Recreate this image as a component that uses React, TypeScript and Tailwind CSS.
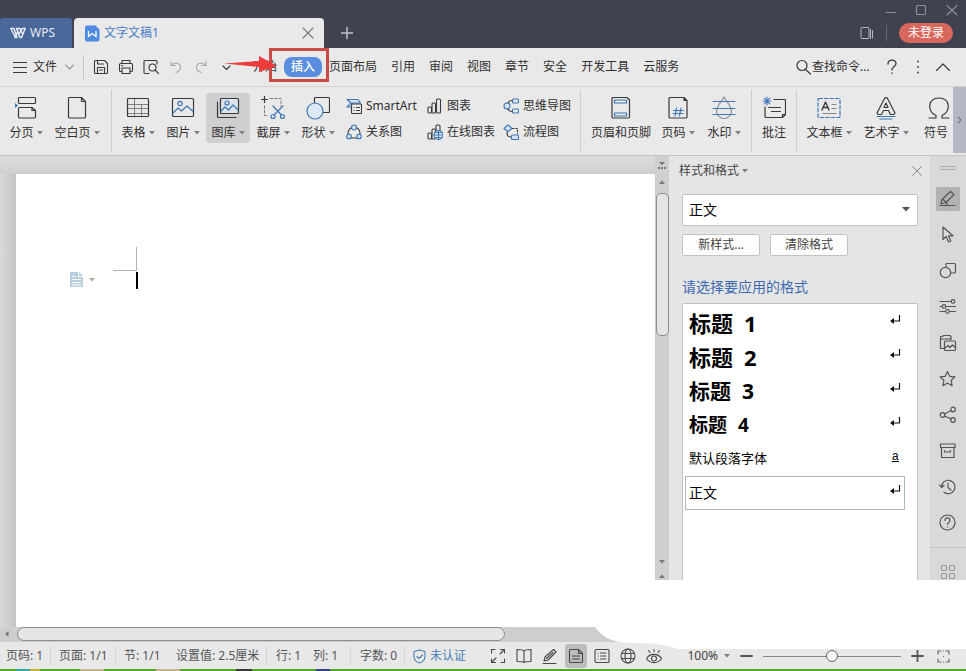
import type { ReactNode } from "react";

const INK = "#3a3a3a";
const BLUE = "#3f76b5";

function Icon({ w = 24, h = 24, stroke = INK, sw = 1.2, children }: { w?: number; h?: number; stroke?: string; sw?: number; children: ReactNode }) {
  return (
    <svg
      width={w}
      height={h}
      viewBox={`0 0 ${w} ${h}`}
      fill="none"
      stroke={stroke}
      strokeWidth={sw}
      strokeLinecap="round"
      strokeLinejoin="round"
      className="shrink-0"
      aria-hidden="true"
    >
      {children}
    </svg>
  );
}

function Caret({ color = "#808080" }: { color?: string }) {
  return (
    <svg width="6" height="4" viewBox="0 0 6 4" fill={color} className="shrink-0" aria-hidden="true">
      <path d="M0 0h6L3 3.5z" />
    </svg>
  );
}

function TitleBar() {
  return (
    <header className="flex h-12 shrink-0 items-end bg-[#40434f]">
      <button className="flex h-[30px] w-[72px] items-center gap-1 rounded-t-[3px] bg-[#496899] pl-2.5 text-[#e4e9f2]">
        <Icon w={16} h={12} stroke="#eef1f7" sw={1.4}>
          <path d="M.8 1.500h3.200L7 10.500h-1.500L.8 1.500M5 10.500 8 4M6.500 1.500h3.500L12 6M6.500 1.500 10 10.500h1.500L15.200 1.500h-3L8.500 8" />
        </Icon>
        <span>WPS</span>
      </button>
      <div className="ml-0.5 flex h-[30px] w-[250px] items-center rounded-t-[4px] bg-[#e9e9e9] pr-2.5 pl-[11px]">
        <svg width="15" height="17" viewBox="0 0 15 17" className="shrink-0" aria-hidden="true">
          <path d="M2 .5h8.500L14.500 4.500V14.500a2 2 0 0 1-2 2H2a2 2 0 0 1-2-2V2.500A2 2 0 0 1 2 .5z" fill="#4f8ae2" />
          <path d="M3.500 6v5.500L7.200 8.500 11 11.500V6" fill="none" stroke="#fff" strokeWidth="1.300" />
        </svg>
        <span className="ml-1 flex-1 text-[#4a7cc7]">文字文稿1</span>
        <button aria-label="关闭标签">
          <Icon w={12} h={12} stroke="#777" sw={1.1}><path d="M1 1l10 10M11 1 1 11" /></Icon>
        </button>
      </div>
      <button className="mb-2 ml-4" aria-label="新建标签">
        <Icon w={14} h={14} stroke="#c2c4ca" sw={1.5}><path d="M7 1.500v11M1.500 7h11" /></Icon>
      </button>
      <div className="ml-auto flex h-full flex-col items-end pr-2">
        <div className="flex h-[19px] items-center gap-[19px]">
          <button aria-label="最小化"><Icon w={10} h={12} stroke="#8f929b" sw={1.1}><path d="M0 8.500h10" /></Icon></button>
          <button aria-label="最大化"><Icon w={12} h={12} stroke="#8f929b" sw={1.1}><rect x="1.500" y="1.500" width="9" height="9" rx="1" /></Icon></button>
          <button aria-label="关闭"><Icon w={12} h={12} stroke="#8f929b" sw={1.1}><path d="M1 1.500l10 9.500M11 1.500 1 11" /></Icon></button>
        </div>
        <div className="mt-1 flex items-center pr-[5px]">
          <button aria-label="切换窗口">
            <Icon w={14} h={14} stroke="#b4b6bc" sw={1}><rect x="1" y="1.500" width="8" height="11" rx="1" /><path d="M10.500 3.500v9M12.500 4.500v7.500" /></Icon>
          </button>
          <span className="mx-3 h-4 w-px bg-[#666975]" />
          <button className="h-5 w-[54px] rounded-full bg-[#d8685d] text-white">未登录</button>
        </div>
      </div>
    </header>
  );
}

const tabs = ["开始", "插入", "页面布局", "引用", "审阅", "视图", "章节", "安全", "开发工具", "云服务"];

function MenuBar() {
  return (
    <nav className="relative flex h-[39px] shrink-0 items-center border-b border-[#d3d3d3] bg-[#e9e9e9] text-[#303030]">
      <button className="flex w-[83px] items-center pl-[13px]">
        <Icon w={14} h={12} sw={1.1}><path d="M0 1.500h14M0 6.500h14M0 11.500h14" /></Icon>
        <span className="ml-1.5">文件</span>
        <span className="ml-2"><Icon w={9} h={6} stroke="#999" sw={1.1}><path d="M.5 1l4 4 4-4" /></Icon></span>
      </button>
      <span className="h-6 w-px bg-[#c6c6c6]" />
      <div className="flex w-[162px] items-center gap-[9px] pl-[9px]">
        <button aria-label="保存">
          <Icon w={16} h={16} sw={1.1}><path d="M2.500 1.500h9l3 3v9a1 1 0 0 1-1 1h-11a1 1 0 0 1-1-1v-11a1 1 0 0 1 1-1zM4.500 14.500v-6h7v6M4.500 1.500v3.500h6M6.500 11h3" /></Icon>
        </button>
        <button aria-label="打印">
          <Icon w={16} h={16} sw={1.1}><path d="M4 4.500v-3h8v3M3.500 12.500h-1a1 1 0 0 1-1-1v-6a1 1 0 0 1 1-1h11a1 1 0 0 1 1 1v6a1 1 0 0 1-1 1h-1M4 9h8v5.500H4zM3.500 6.800h1.500" /></Icon>
        </button>
        <button aria-label="打印预览">
          <Icon w={16} h={16} sw={1.1}><path d="M6 14.500H2a1 1 0 0 1-1-1v-11a1 1 0 0 1 1-1h11a1 1 0 0 1 1 1V5" /><circle cx="9.500" cy="8.500" r="3.500" /><path d="M12 11l3.500 3.500" /></Icon>
        </button>
        <button aria-label="撤销">
          <Icon w={16} h={16} stroke="#a8a8a8" sw={1.1}><path d="M3 2.500v4h4.500M3 6.500C6 3 12.500 3.500 12.500 8.500c0 3-2 4-4.500 5" /></Icon>
        </button>
        <button aria-label="恢复">
          <Icon w={16} h={16} stroke="#a8a8a8" sw={1.1}><path d="M13 2.500v4H8.500M13 6.500C10 3 3.500 3.500 3.500 8.500c0 3 2 4 4.500 5" /></Icon>
        </button>
        <button aria-label="自定义快速访问工具栏" className="ml-1">
          <Icon w={9} h={8} sw={1.1}><path d="M1 3l3.500 3.500L8 3" /></Icon>
        </button>
      </div>
      <div className="flex shrink-0 items-center">
        {tabs.map((t) => (
          <button key={t} className={t === "插入" ? "h-5 rounded-lg bg-[#5a8de0] px-[7px] font-medium text-white" : "h-5 px-[7px]"}>
            {t}
          </button>
        ))}
      </div>
      <div className="ml-auto flex items-center pr-4">
        <label className="flex items-center gap-px">
          <Icon w={15} h={16} sw={1.2}><circle cx="6" cy="6.500" r="5" /><path d="M9.500 10.500l5 4.500" /></Icon>
          <input aria-label="查找命令" placeholder="查找命令..." className="w-[60px] bg-transparent outline-none placeholder:text-[#303030]" />
        </label>
        <button aria-label="帮助" className="ml-3.5">
          <Icon w={12} h={16} sw={1.3}><path d="M2 5c0-5 8-5 8-.5C10 7.500 6 7.500 6 11M6 14v.4" /></Icon>
        </button>
        <button aria-label="更多" className="ml-[17px]">
          <Icon w={6} h={16} sw={1.800}><path d="M3 2.500v.1M3 8v.1M3 13.500v.1" /></Icon>
        </button>
        <button aria-label="折叠功能区" className="ml-[15px]">
          <Icon w={14} h={8} sw={1.2}><path d="M.5 7.500L7 1l6.500 6.500" /></Icon>
        </button>
      </div>
      <div className="pointer-events-none absolute top-0 left-[269px] h-[34px] w-[60px] border-[3px] border-[#c84b48]" />
      <svg width="54" height="20" viewBox="0 0 54 20" fill="#ee3b3c" className="pointer-events-none absolute top-[7px] left-[224px]" aria-hidden="true">
        <path d="M0 8.500 35 6V1l18 10L35 17v-5z" />
      </svg>
    </nav>
  );
}

function BigButton({ label, icon, caret = true, wide = "w-11", active = false }: { label: string; icon: ReactNode; caret?: boolean; wide?: string; active?: boolean }) {
  return (
    <button className={`${wide} flex h-[50px] shrink-0 flex-col items-center justify-between rounded pt-[3px] pb-px ${active ? "bg-[#cfcfcf]" : ""}`}>
      {icon}
      <span className="flex items-center gap-[3px] leading-[18px] whitespace-nowrap">
        {label}
        {caret && <Caret />}
      </span>
    </button>
  );
}

function Rule() {
  return <span className="h-[62px] w-px shrink-0 bg-[#cdcdcd]" />;
}

const smallTools: { label: string; icon: ReactNode }[] = [
  { label: "SmartArt", icon: <Icon w={16} h={16} sw={1.1}><path d="M6 9H1l4-4L1 1.500h11L14.500 5H6z" fill="#d5e4f5" stroke={BLUE} /><rect x="5.500" y="6" width="10" height="9.500" rx="1" fill="#e9e9e9" /><path d="M8 9.500h.1M10.500 9.500h3M8 12.500h.1M10.500 12.500h3" /></Icon> },
  { label: "图表", icon: <Icon w={16} h={16} sw={1.1}><rect x="1" y="9" width="3.500" height="6" rx="1" /><rect x="5" y="5" width="3.500" height="10" rx="1" /><rect x="9.500" y="1" width="4" height="14" rx="1" /></Icon> },
  { label: "思维导图", icon: <Icon w={16} h={16} stroke={BLUE} sw={1.1}><circle cx="4" cy="8" r="3" fill="#d5e4f5" /><rect x="9.500" y="1" width="6" height="4" rx="1" /><rect x="9.500" y="11" width="6" height="4" rx="1" /><path d="M5 5c1-2 2-2.500 4-2.500M5 11c1 2 2 2.500 4 2.500" stroke={INK} /></Icon> },
  { label: "关系图", icon: <Icon w={16} h={16} sw={1.1}><path d="M5 4C2 5.500 2 8 2 10M11 4c3 1.500 3 4 3 6M5 14h6" /><g fill="#d5e4f5" stroke={BLUE}><circle cx="8" cy="3.500" r="2.500" /><circle cx="3" cy="12.500" r="2.300" /><circle cx="13" cy="12.500" r="2.300" /></g></Icon> },
  { label: "在线图表", icon: <Icon w={16} h={16} sw={1.1}><rect x="1" y="9" width="3.500" height="6" rx="1" /><rect x="5" y="5" width="3.500" height="10" rx="1" /><rect x="9" y="1" width="4" height="12" rx="1" /><circle cx="11.500" cy="11" r="4.500" fill="#e3edf8" stroke={BLUE} /><path d="M7 11h9M11.500 6.500v9M8 8.500h7M8 13.500h7" stroke={BLUE} /></Icon> },
  { label: "流程图", icon: <Icon w={16} h={16} sw={1.1}><path d="M5 .8L9 4.500 5 7.500 1 4.500z" fill="#d5e4f5" stroke={BLUE} /><path d="M9.500 4.500h5v5" strokeDasharray="1.500 1.800" /><path d="M4 8c0 4 1 5 4 5" /><rect x="8.500" y="11" width="7" height="4.500" rx="1" fill="#d5e4f5" stroke={BLUE} /></Icon> },
];

function Ribbon() {
  return (
    <section className="flex h-[69px] shrink-0 items-center overflow-hidden border-b border-[#c4c4c4] bg-[#e9e9e9] text-[#303030]">
      <div className="flex h-full w-[111px] shrink-0 pt-1.5 pl-1">
        <BigButton label="分页" icon={<Icon><rect x="4.500" y="1.500" width="17" height="6" rx="1" /><path d="M5.500 11.500h12.500l3.500 3V21a1 1 0 0 1-1 1h-15a1 1 0 0 1-1-1v-8.500a1 1 0 0 1 1-1zM18 11.500v3h3.500" /><path d="M1 7l3 2.500L1 12z" fill={BLUE} stroke="none" /></Icon>} />
        <BigButton label="空白页" wide="w-[58px]" icon={<Icon><path d="M4.500 1.500h12l4 4V21a1 1 0 0 1-1 1h-15a1 1 0 0 1-1-1V2.500a1 1 0 0 1 1-1zM16.500 1.500v4h4" /></Icon>} />
      </div>
      <Rule />
      <div className="flex h-full w-[234px] shrink-0 gap-px pt-1.5 pl-1">
        <BigButton label="表格" icon={<Icon><path d="M2 8.500h20M2 12.500h20M2 17.500h20M8.500 2v19M15.500 8.500V21" stroke="#808080" strokeWidth="1" /><rect x="1.500" y="2.500" width="21" height="18" rx="1" /></Icon>} />
        <BigButton label="图片" icon={<Icon><rect x="1.500" y="2.500" width="21" height="18" rx="1" /><g stroke={BLUE}><circle cx="9" cy="7.500" r="2.200" /><path d="M2 17l5-5 3.500 3L16 10l6 5.500" /></g></Icon>} />
        <BigButton label="图库" active icon={<Icon><rect x="4.500" y="2.500" width="18" height="15" rx="1" fill="#dce3ec" /><path d="M1.500 6v14.500a1 1 0 0 0 1 1H20" /><g stroke={BLUE}><circle cx="11" cy="7" r="2" /><path d="M5 15l4-4 3.500 3L17 9l5 5" /></g></Icon>} />
        <BigButton label="截屏" icon={<Icon><path d="M3.500 0v7M0 3.500h7" strokeLinecap="butt" /><path d="M9 2.500h11v8M3.500 10v9.500h4" stroke="#777" strokeWidth="1" strokeDasharray="2.500 2" /><g stroke={BLUE}><path d="M12 10l8.500 9M22 10l-9 9" /><circle cx="12" cy="20.500" r="2" /><circle cx="21.500" cy="20.500" r="2" /></g></Icon>} />
        <BigButton label="形状" icon={<Icon><rect x="8.500" y="1.500" width="15" height="15" rx="1" /><circle cx="9" cy="15" r="8" fill="#dde9f6" stroke={BLUE} /></Icon>} />
      </div>
      <div className="grid h-full w-[234px] shrink-0 grid-cols-[81px_76px_77px] grid-rows-[26px_26px] pt-1.5">
        {smallTools.map((t) => (
          <button key={t.label} className="flex items-center gap-1 whitespace-nowrap">
            {t.icon}
            {t.label}
          </button>
        ))}
      </div>
      <Rule />
      <div className="flex h-full w-[170px] shrink-0 pt-1.5 pl-1.5">
        <BigButton label="页眉和页脚" caret={false} wide="w-[68px]" icon={<Icon><path d="M4 1.500h14l2.500 2.500V21a1 1 0 0 1-1 1H4a1 1 0 0 1-1-1V2.500a1 1 0 0 1 1-1z" /><rect x="5.500" y="4" width="12" height="3" stroke={BLUE} /><rect x="5.500" y="17" width="12" height="3" stroke={BLUE} /></Icon>} />
        <BigButton label="页码" wide="w-[46px]" icon={<Icon><path d="M4 1.500h14l3 3V21a1 1 0 0 1-1 1H4a1 1 0 0 1-1-1V2.500a1 1 0 0 1 1-1zM18 1.500v3h3" /><path d="M10.500 12l-1.500 8M15 12l-1.500 8M7.500 14.500h10M7 17.500h10" stroke={BLUE} /></Icon>} />
        <BigButton label="水印" wide="w-[46px]" icon={<Icon><path d="M12 1c-2 4-7.500 9-7.500 14a7.500 7.500 0 0 0 15 0C19.500 10 14 5 12 1z" stroke="#8a9099" /><path d="M1 5.500h22M1 12.500h22M1 18.500h22" stroke={BLUE} /></Icon>} />
      </div>
      <Rule />
      <div className="flex h-full w-11 shrink-0 pt-1.5">
        <BigButton label="批注" caret={false} icon={<Icon><path d="M12 3.500h10.500a1 1 0 0 1 1 1v14l-3 3H4a1 1 0 0 1-1-1V11M6.500 11.500h12M9.500 15.500h9M20.500 21.500v-3h3" /><path d="M5 1v8M1 5h8M2.200 2.200l5.600 5.600M7.800 2.200L2.200 7.800" stroke={BLUE} strokeWidth="1.100" /></Icon>} />
      </div>
      <Rule />
      <div className="flex h-full shrink-0 pt-1.5 pl-1">
        <BigButton label="文本框" wide="w-14" icon={<Icon><rect x="1" y="2.500" width="22" height="19" rx="1" stroke={BLUE} strokeDasharray="3.500 2" /><path d="M5 14L8.500 6l3.500 8M6.200 11.500h4.600" strokeWidth="1.400" /><path d="M15 8.500h4M15 12.500h4M6 17.500h13" stroke="#888" strokeWidth="1" /></Icon>} />
        <BigButton label="艺术字" wide="w-[58px]" icon={<Icon><path d="M10.500 2.500a1.700 1.700 0 0 1 3 0l7.500 14.500-1 1.500h-3.500l-2-4h-5l-2 4H4L3 17zM12 7l-2 4.500h4z" /><path d="M3 20.500h18M6 23h12" stroke={BLUE} /></Icon>} />
        <BigButton label="符号" caret={false} wide="w-[38px] pl-1" icon={<span className="pl-1.5"><Icon><path d="M2 22h7v-2.500C-.5 15 1 2 12 2s12.500 13 3 17.500V22h7" /></Icon></span>} />
      </div>
      <button aria-label="向右滚动" className="mb-0.5 ml-auto flex h-[66px] w-[13px] shrink-0 items-center justify-center bg-[#b4b8c6]">
        <Icon w={5} h={8} stroke="#707583" sw={1.1}><path d="M1 1l3 3-3 3" /></Icon>
      </button>
    </section>
  );
}

function Tri({ up = false }: { up?: boolean }) {
  return (
    <svg width="8" height="4" viewBox="0 0 8 4" fill="#777" className={up ? "block rotate-180" : "block"} aria-hidden="true">
      <path d="M1 0h6L4 3.500z" />
    </svg>
  );
}

function DocumentArea() {
  return (
    <div className="flex min-w-0 flex-1">
      <main className="flex flex-1 flex-col bg-[#d4d4d4]">
        <div className="h-[18px] shrink-0 bg-linear-to-b from-[#dcdcdc] to-[#cfcfcf]" />
        <div className="flex flex-1">
          <div className="w-4 bg-linear-to-r from-[#dadada] to-[#c4c4c4]" />
          <article className="flex flex-1 items-start bg-white pt-[73px] pl-[54px]">
            <button aria-label="段落布局" className="mt-[25px] flex items-center gap-[5px]">
              <svg width="14" height="16" viewBox="0 0 14 16" aria-hidden="true">
                <path d="M0 0h8v5h5v10H0z" fill="#b9cfe0" />
                <path d="M9 0l4 4H9z" fill="#b9cfe0" />
                <path d="M2 4.500h4M2 7.500h9M2 10.500h9M2 13h9" stroke="#fff" />
              </svg>
              <Caret color="#aaa99a" />
            </button>
            <div className="ml-[18px] flex w-[25px] flex-col items-end">
              <span className="mr-px h-6 w-6 border-r border-b border-[#b5b5b5]" />
              <span className="mt-px h-[17px] w-0.5 bg-black" />
            </div>
          </article>
        </div>
      </main>
      <div className="flex w-3.5 shrink-0 flex-col items-center bg-[#cfcfcf]">
        <svg width="8" height="8" viewBox="0 0 8 8" className="mt-1.5" fill="#777" aria-hidden="true">
          <path d="M1 0h6L4 3zM0 5h2v2H0zM3 5h2v2H3zM6 5h2v2H6z" />
        </svg>
        <span className="mt-2.5"><Tri up /></span>
        <span className="mt-[9px] h-[143px] w-[13px] shrink-0 rounded-[5px] border border-[#8c8c8c] bg-[#e4e4e4]" />
        <span className="mt-auto flex flex-col items-center gap-2.5 pb-[49px]">
          <Tri />
          <Tri up />
        </span>
      </div>
    </div>
  );
}

function ReturnMark() {
  return (
    <Icon w={12} h={12} stroke="#111" sw={1.2}>
      <path d="M10.500 1v6H3" strokeLinecap="butt" strokeLinejoin="miter" />
      <path d="M1 7l4-3v6z" fill="#111" stroke="none" />
    </Icon>
  );
}

const headings = [
  { n: "1", size: "text-[22px]" },
  { n: "2", size: "text-[22px]" },
  { n: "3", size: "text-[21px]" },
  { n: "4", size: "text-[19px]" },
];

function StylesPane() {
  return (
    <aside className="flex w-[261px] shrink-0 flex-col bg-[#e5e5e5] pr-3 pl-[13px] text-[#444]">
      <div className="flex h-[30px] items-center justify-between">
        <button className="-ml-[3px] flex items-center gap-[3px]">
          样式和格式
          <Caret />
        </button>
        <button aria-label="关闭窗格" className="-mr-1">
          <Icon w={10} h={10} stroke="#888" sw={1}><path d="M.5 .5l9 9M9.500 .5l-9 9" /></Icon>
        </button>
      </div>
      <label className="relative mt-2 block">
        <select aria-label="当前样式" className="h-8 w-full appearance-none rounded-xs border border-[#c2c2c2] bg-white pl-1.5 text-sm text-black">
          <option>正文</option>
        </select>
        <svg width="8" height="5" viewBox="0 0 8 5" fill="#555" className="pointer-events-none absolute top-[13px] right-2" aria-hidden="true"><path d="M0 0h8L4 4.500z" /></svg>
      </label>
      <div className="mt-2 flex gap-2.5">
        <button className="h-[22px] w-[78px] rounded-xs border border-[#c2c2c2] bg-[#fdfdfd] leading-5">新样式...</button>
        <button className="h-[22px] w-[78px] rounded-xs border border-[#c2c2c2] bg-[#fdfdfd] leading-5">清除格式</button>
      </div>
      <h2 className="mt-[21px] text-sm text-[#3d69b0]">请选择要应用的格式</h2>
      <div className="mt-1.5 flex flex-1 flex-col rounded-t-xs border border-b-0 border-[#c2c2c2] bg-white py-0.5 pr-3 pl-0.5 text-black">
        {headings.map((h) => (
          <button key={h.n} className={`${h.size} flex h-[34px] items-center justify-between border border-transparent px-[3px] font-bold`}>
            <span className="flex gap-[11px] leading-8"><span>标题</span><span>{h.n}</span></span>
            <span className="pb-1.5"><ReturnMark /></span>
          </button>
        ))}
        <button className="flex h-[34px] items-center justify-between border border-transparent pr-[5px] pl-[3px] text-[13px]">
          默认段落字体
          <span className="pb-1 font-mono text-xs underline">a</span>
        </button>
        <button className="flex h-[34px] items-center justify-between border border-[#a9b9c2] px-[3px] text-sm">
          正文
          <span className="pb-1.5"><ReturnMark /></span>
        </button>
      </div>
    </aside>
  );
}

const sideTools: { label: string; icon: ReactNode }[] = [
  { label: "样式", icon: <><path d="M1 15.500h15M2 14l1-4.500L11.500 1.500l3.500 3L7 12.500zM3.500 9l4 3.500M8 15v-2" /></> },
  { label: "选择", icon: <path d="M4 1v12.500l3.200-3 2.300 5.500 2.300-1-2.300-5.200h4.500z" /> },
  { label: "形状", icon: <><path d="M7 5V2.500a1 1 0 0 1 1-1h7.500a1 1 0 0 1 1 1V10a1 1 0 0 1-1 1H12" /><circle cx="6.500" cy="10.500" r="5.200" /></> },
  { label: "属性", icon: <><path d="M1 3.500h11M1 8.500h2M7 8.500h9.500M1 13.500h5.500M10.500 13.500h6" /><circle cx="14" cy="3.500" r="1.800" /><circle cx="5" cy="8.500" r="1.800" /><circle cx="8.500" cy="13.500" r="1.800" /></> },
  { label: "图库", icon: <><path d="M5 14.500H1.500V2.500h2l1-1H11l1 1v3M1.500 5H12" /><rect x="5.500" y="7" width="11" height="9.500" rx="1" /><path d="M6 14l3-2.500 2 2 2.500-2.500 3 2.500" /></> },
  { label: "收藏", icon: <path d="M8.500 1.500l2.200 4.800 5.200.6-3.800 3.600 1 5.200-4.600-2.600-4.600 2.600 1-5.200L1.100 6.900l5.200-.6z" /> },
  { label: "分享", icon: <><circle cx="3.500" cy="9" r="2.300" /><circle cx="14" cy="3.500" r="2.300" /><circle cx="14" cy="14" r="2.300" /><path d="M5.500 8L12 4.500M5.500 10l6.500 3" /></> },
  { label: "归档", icon: <><rect x="1.500" y="2" width="14.500" height="3.500" /><path d="M2.500 5.500V15.500h12.500V5.500M5.500 8.500v1.500h6V8.500" /></> },
  { label: "历史", icon: <><path d="M2.500 9a6.700 6.700 0 1 1 2.500 5.200M.5 7l2 2.500 2.500-2M9 5v4.500l3 2.500" /></> },
  { label: "帮助", icon: <><circle cx="8.500" cy="8.500" r="7.500" /><path d="M6 6.500c0-3.500 5-3.500 5 0 0 2-2.500 2-2.500 4M8.500 12.800v.1" /></> },
];

function SideBar() {
  return (
    <div className="flex w-9 shrink-0 flex-col items-center bg-[#d9d9d9]">
      <span className="mt-2.5 h-1 w-4 shrink-0 border-y border-[#aaa]" />
      <div className="mt-[17px] flex flex-col gap-3">
        {sideTools.map((t, i) => (
          <button key={t.label} aria-label={t.label} className={`flex size-6 items-center justify-center rounded-xs ${i === 0 ? "bg-[#b2b2b2]" : ""}`}>
            <Icon w={18} h={18} stroke="#555" sw={1.2}>{t.icon}</Icon>
          </button>
        ))}
      </div>
      <span className="mt-3 h-px w-full bg-[#c4c4c4]" />
      <button aria-label="更多工具" className="mt-4">
        <Icon w={16} h={16} stroke="#999" sw={1.1}><rect x="1.500" y="1.500" width="5" height="5" rx="1" /><rect x="9.500" y="1.500" width="5" height="5" rx="1" /><rect x="1.500" y="9.500" width="5" height="5" rx="1" /><rect x="9.500" y="9.500" width="5" height="5" rx="1" /></Icon>
      </button>
    </div>
  );
}

const viewModes: { label: string; icon: ReactNode }[] = [
  { label: "全屏显示", icon: <path d="M1.500 5V1.500H5M10.500 1.500h4V5M14.500 11v3.500H11M5.500 14.500h-4V11M10 6l4-4M6 10l-4 4" /> },
  { label: "阅读版式", icon: <path d="M8 3v11.500M8 3C7 1.500 4 1.500 1 1.500v12c3 0 6 0 7 1 1-1 4-1 7-1v-12c-3 0-6 0-7 1.500z" /> },
  { label: "写作模式", icon: <path d="M1 15.500h13M2 13l1-4L11.500 1.500l2.500 2.500L6 12zM4.500 10.500l6.500-6" /> },
  { label: "页面视图", icon: <path d="M2.500 1.500h8l4 4v8a1 1 0 0 1-1 1h-11a1 1 0 0 1-1-1v-11a1 1 0 0 1 1-1zM10.500 1.500v4h4M4.500 8h7M4.500 11h7" /> },
  { label: "大纲视图", icon: <><rect x="1" y="1.500" width="14" height="13" rx="1" /><path d="M4 5h.1M6.500 5H12M4 8h.1M6.500 8H12M4 11h.1M6.500 11H12" /></> },
  { label: "网页视图", icon: <><circle cx="8" cy="8" r="7" /><ellipse cx="8" cy="8" rx="3" ry="7" /><path d="M1.500 5.500h13M1.500 10.500h13" /></> },
  { label: "护眼模式", icon: <><path d="M.5 10.500c3.500-5.500 11.500-5.500 15 0-3.500 5.500-11.500 5.500-15 0z" /><circle cx="8" cy="10.500" r="2.500" /><path d="M8 1.500v2M2.500 2.500L4 4.500M13.500 2.500L12 4.500" /></> },
];

function Divider() {
  return <span className="h-5 w-px shrink-0 bg-[#d6d6d6]" />;
}

function StatusBar() {
  return (
    <footer className="flex h-[27px] shrink-0 items-center bg-[#e8e8e8] pt-px whitespace-nowrap text-[#555]">
      <span className="w-[50px] shrink-0 pl-1.5">页码: 1</span>
      <Divider />
      <span className="w-[64px] shrink-0 pl-2">页面: 1/1</span>
      <Divider />
      <span className="w-[60px] shrink-0 pl-2">节: 1/1</span>
      <span className="w-[90px] shrink-0">设置值: 2.5厘米</span>
      <Divider />
      <span className="w-[46px] shrink-0 pl-[9px]">行: 1</span>
      <span className="w-[37px] shrink-0">列: 1</span>
      <Divider />
      <span className="w-[53px] shrink-0 pl-[9px]">字数: 0</span>
      <Divider />
      <button className="flex w-[82px] shrink-0 items-center gap-1 pl-2 text-[#4a7fb8]">
        <Icon w={13} h={15} stroke="#4a7fb8" sw={1.1}><path d="M6.500 1L12 2.500v5c0 3.500-2.500 5.500-5.500 6.500C3.500 13 1 11 1 7.500v-5zM4 7.500l2 2 3.500-3.500" /></Icon>
        未认证
      </button>
      <div className="flex shrink-0 gap-1">
        {viewModes.map((v) => (
          <button key={v.label} aria-label={v.label} className={`flex h-6 w-[22px] items-center justify-center rounded-[3px] ${v.label === "页面视图" ? "bg-[#bdbdbd]" : ""}`}>
            <Icon w={16} h={16} stroke="#484848" sw={1.1}>{v.icon}</Icon>
          </button>
        ))}
      </div>
      <div className="ml-auto flex items-center pr-4">
        <button className="flex items-center gap-1.5 text-[#444]">100% <Caret /></button>
        <button aria-label="缩小" className="ml-2.5"><Icon w={13} h={12} stroke="#555" sw={1.800}><path d="M1 6h11" /></Icon></button>
        <input
          type="range"
          aria-label="显示比例"
          defaultValue={50}
          className="mx-2.5 h-3 w-[138px] appearance-none bg-transparent [&::-webkit-slider-runnable-track]:h-px [&::-webkit-slider-runnable-track]:bg-[#888] [&::-webkit-slider-thumb]:-mt-[6px] [&::-webkit-slider-thumb]:size-3 [&::-webkit-slider-thumb]:appearance-none [&::-webkit-slider-thumb]:rounded-full [&::-webkit-slider-thumb]:border [&::-webkit-slider-thumb]:border-[#666] [&::-webkit-slider-thumb]:bg-[#f4f4f4]"
        />
        <button aria-label="放大"><Icon w={13} h={12} stroke="#555" sw={1.800}><path d="M1 6h11M6.500 .5v11" /></Icon></button>
        <button aria-label="适应窗口" className="ml-[13px]">
          <Icon w={13} h={13} stroke="#666" sw={1.200}><path d="M1 4V1h3M9 1h3v3M12 9v3H9M4 12H1V9M6.500 6.500v.1M6.500 1v.1M6.500 12v.1" /></Icon>
        </button>
      </div>
    </footer>
  );
}

export default function App() {
  return (
    <div className="relative flex h-screen min-h-[640px] flex-col overflow-hidden bg-[#e9e9e9] font-['Noto_Sans','Noto_Sans_CJK_SC',sans-serif] text-xs">
      <TitleBar />
      <MenuBar />
      <Ribbon />
      <div className="flex min-h-0 flex-1">
        <DocumentArea />
        <StylesPane />
        <SideBar />
      </div>
      <div className="flex h-[15px] shrink-0 items-start bg-[#cecece]">
        <svg width="5" height="8" viewBox="0 0 5 8" fill="#777" className="mt-[3px] mr-2 ml-1" aria-hidden="true"><path d="M4.500 1v6L1 4z" /></svg>
        <span className="h-3.5 w-[50.5%] rounded-full border border-[#8c8c8c] bg-[#e6e6e6]" />
      </div>
      <StatusBar />
      <div className="flex h-0.5 shrink-0 bg-[#4fa82a]">
        <span className="ml-4 w-3.5 bg-[#3aa79a]" />
        <span className="w-2.5 bg-[#c8b040]" />
        <span className="ml-10 w-6 bg-[#c9b28a]" />
        <span className="ml-[52px] w-6 bg-[#c9b28a]" />
        <span className="ml-14 w-4 bg-[#333a35]" />
        <span className="ml-16 w-3.5 bg-[#35457f]" />
      </div>
      <svg width="372" height="69" viewBox="0 0 372 69" fill="#fff" className="pointer-events-none absolute right-0 bottom-[22px]" aria-hidden="true">
        <path d="M0 0H372V69H84C70 65 62 63 40 63 16 63 8 56 1 47z" />
      </svg>
    </div>
  );
}
